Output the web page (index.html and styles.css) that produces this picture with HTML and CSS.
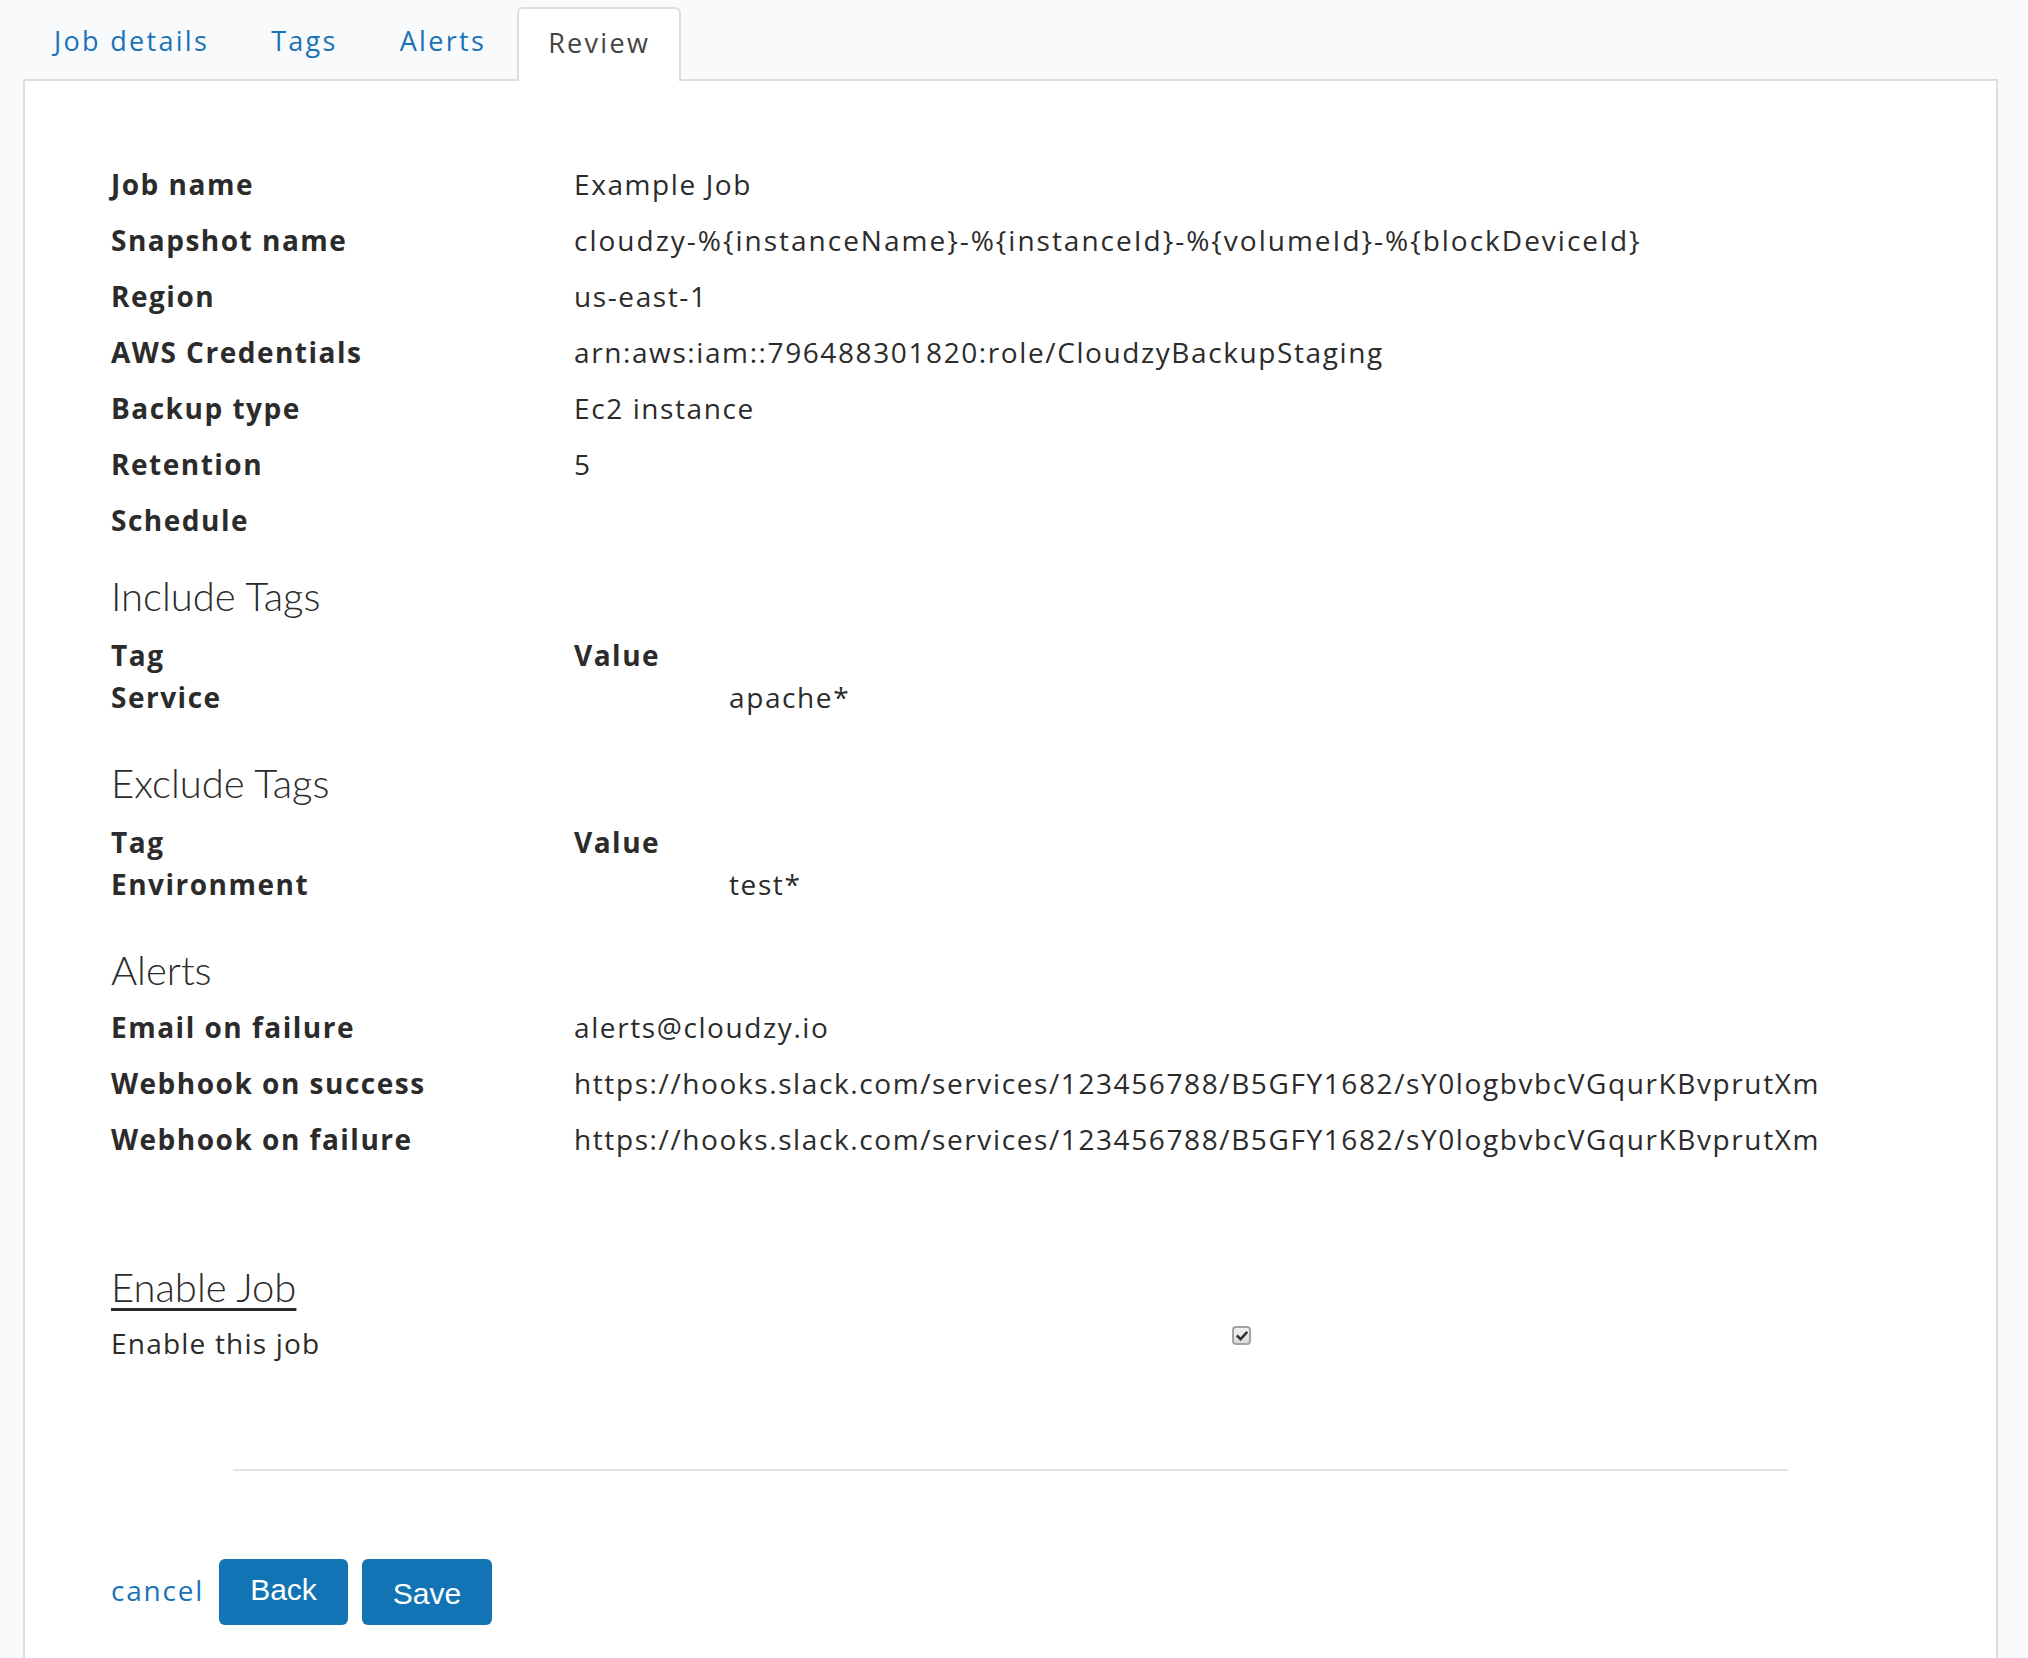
FILE: index.html
```html
<!DOCTYPE html>
<html lang="en">
<head>
<meta charset="utf-8">
<title>Review</title>
<link rel="stylesheet" href="styles.css">
</head>
<body>
<div class="page">
  <nav class="tabs">
    <a class="tab" href="#">Job details</a>
    <a class="tab" href="#">Tags</a>
    <a class="tab" href="#">Alerts</a>
    <span class="tab active">Review</span>
  </nav>
  <main class="panel">
    <div class="kv">
      <div class="kv-row"><span class="label">Job name</span><span class="value">Example Job</span></div>
      <div class="kv-row"><span class="label">Snapshot name</span><span class="value snap">cloudzy-%{instanceName}-%{instanceId}-%{volumeId}-%{blockDeviceId}</span></div>
      <div class="kv-row"><span class="label">Region</span><span class="value">us-east-1</span></div>
      <div class="kv-row"><span class="label">AWS Credentials</span><span class="value">arn:aws:iam::796488301820:role/CloudzyBackupStaging</span></div>
      <div class="kv-row"><span class="label">Backup type</span><span class="value">Ec2 instance</span></div>
      <div class="kv-row"><span class="label">Retention</span><span class="value">5</span></div>
      <div class="kv-row"><span class="label">Schedule</span><span class="value"></span></div>
    </div>

    <h2 class="section first">Include Tags</h2>
    <div class="tags">
      <div class="tag-row"><span class="label">Tag</span><span class="label">Value</span></div>
      <div class="tag-row"><span class="label">Service</span><span class="value tag-value">apache*</span></div>
    </div>

    <h2 class="section">Exclude Tags</h2>
    <div class="tags">
      <div class="tag-row"><span class="label">Tag</span><span class="label">Value</span></div>
      <div class="tag-row"><span class="label">Environment</span><span class="value tag-value">test*</span></div>
    </div>

    <h2 class="section">Alerts</h2>
    <div class="kv alerts">
      <div class="kv-row"><span class="label">Email on failure</span><span class="value">alerts@cloudzy.io</span></div>
      <div class="kv-row"><span class="label">Webhook on success</span><span class="value">https://hooks.slack.com/services/123456788/B5GFY1682/sY0logbvbcVGqurKBvprutXm</span></div>
      <div class="kv-row"><span class="label">Webhook on failure</span><span class="value">https://hooks.slack.com/services/123456788/B5GFY1682/sY0logbvbcVGqurKBvprutXm</span></div>
    </div>

    <h2 class="section enable">Enable Job</h2>
    <div class="enable-row">
      <span class="plain">Enable this job</span>
      <span class="checkbox" role="checkbox" aria-checked="true">
        <svg viewBox="0 0 12 12" width="12" height="12"><path d="M1.8 6.4 L4.6 9.2 L10.4 2.8" fill="none" stroke="#333" stroke-width="2.6" stroke-linecap="square"/></svg>
      </span>
    </div>

    <hr class="divider">

    <div class="actions">
      <a class="cancel" href="#">cancel</a>
      <button class="btn back" type="button">Back</button>
      <button class="btn save" type="button">Save</button>
    </div>
  </main>
</div>
</body>
</html>
```

FILE: styles.css
```css
html, body {
  margin: 0;
  padding: 0;
}

body {
  background: #f9fafc;
  font-family: "Open Sans", "Noto Sans", sans-serif;
  color: #2b2b2b;
  overflow: hidden;
}

.page {
  min-height: 100vh;
  box-sizing: border-box;
  padding: 7px 30px 0 23px;
  display: flex;
  flex-direction: column;
}

.tabs {
  display: flex;
  height: 72px;
}

.tab {
  display: flex;
  align-items: center;
  padding: 0 31px 6px;
  font-size: 27px;
  letter-spacing: 2.3px;
  color: #1a73b6;
  text-decoration: none;
}

.tab.active {
  position: relative;
  z-index: 1;
  background: #fff;
  color: #444;
  border: 2px solid #dcdde0;
  border-bottom: none;
  border-radius: 6px 6px 0 0;
  padding: 0 29px 6px;
  box-sizing: border-box;
  margin-bottom: -2px;
  height: 74px;
}

.panel {
  flex: 1;
  background: #fff;
  border: 2px solid #dcdde0;
  border-bottom: none;
  padding: 75px 86px 32px 86px;
}

.kv-row {
  display: grid;
  grid-template-columns: 463px 1fr;
  line-height: 56px;
  font-size: 28px;
}

.label {
  font-weight: 700;
  letter-spacing: 1.5px;
  color: #2b2b2b;
}

.value {
  font-weight: 400;
  letter-spacing: 1.6px;
  color: #2b2b2b;
}

.value.snap {
  letter-spacing: 2px;
}

.section {
  font-family: "Lato", sans-serif;
  font-weight: 300;
  font-size: 40px;
  line-height: 56px;
  margin: 37px 0 0;
  color: #2b2b2b;
}

.section.first {
  margin-top: 20px;
}

.tags {
  margin-top: 10px;
}

.tag-row {
  display: grid;
  grid-template-columns: 463px 1fr;
  line-height: 42px;
  font-size: 28px;
}

.tag-value {
  padding-left: 155px;
}

.alerts {
  margin-top: 1px;
}

.section.enable {
  margin-top: 92px;
  text-decoration: underline;
  text-decoration-thickness: 3px;
  text-underline-offset: 6px;
}

.enable-row {
  display: grid;
  grid-template-columns: 1121px auto;
  line-height: 56px;
  font-size: 28px;
}

.plain {
  letter-spacing: 1.2px;
}

.checkbox {
  align-self: start;
  justify-self: start;
  margin-top: 11px;
  width: 19px;
  height: 19px;
  box-sizing: border-box;
  border: 2px solid #a3a3a3;
  border-radius: 4px;
  background: linear-gradient(#f2f2f2, #dcdcdc);
  display: flex;
  align-items: center;
  justify-content: center;
}

.checkbox svg {
  display: block;
}

.divider {
  width: 1555px;
  margin: 98px auto 0;
  border: none;
  border-top: 2px solid #e3e3e3;
  height: 0;
}

.actions {
  display: flex;
  align-items: center;
  margin-top: 88px;
}

.cancel {
  font-size: 28px;
  letter-spacing: 1.8px;
  color: #1a73b6;
  text-decoration: none;
  margin-right: 15px;
  padding-bottom: 4px;
}

.btn {
  height: 66px;
  border: none;
  border-radius: 6px;
  background: #1273b5;
  color: #fff;
  font-family: "Liberation Sans", Arial, sans-serif;
  font-size: 30px;
  padding: 0 31px;
  cursor: pointer;
}

.btn.save {
  margin-left: 14px;
  padding: 4px 31px 0;
}

.btn.back {
  padding-bottom: 4px;
}
```
